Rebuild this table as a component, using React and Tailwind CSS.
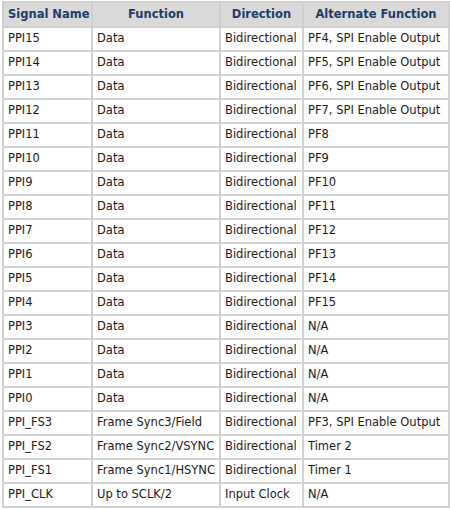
export default function App() {
  const rows = [
    ["PPI15", "Data", "Bidirectional", "PF4, SPI Enable Output"],
    ["PPI14", "Data", "Bidirectional", "PF5, SPI Enable Output"],
    ["PPI13", "Data", "Bidirectional", "PF6, SPI Enable Output"],
    ["PPI12", "Data", "Bidirectional", "PF7, SPI Enable Output"],
    ["PPI11", "Data", "Bidirectional", "PF8"],
    ["PPI10", "Data", "Bidirectional", "PF9"],
    ["PPI9", "Data", "Bidirectional", "PF10"],
    ["PPI8", "Data", "Bidirectional", "PF11"],
    ["PPI7", "Data", "Bidirectional", "PF12"],
    ["PPI6", "Data", "Bidirectional", "PF13"],
    ["PPI5", "Data", "Bidirectional", "PF14"],
    ["PPI4", "Data", "Bidirectional", "PF15"],
    ["PPI3", "Data", "Bidirectional", "N/A"],
    ["PPI2", "Data", "Bidirectional", "N/A"],
    ["PPI1", "Data", "Bidirectional", "N/A"],
    ["PPI0", "Data", "Bidirectional", "N/A"],
    ["PPI_FS3", "Frame Sync3/Field", "Bidirectional", "PF3, SPI Enable Output"],
    ["PPI_FS2", "Frame Sync2/VSYNC", "Bidirectional", "Timer 2"],
    ["PPI_FS1", "Frame Sync1/HSYNC", "Bidirectional", "Timer 1"],
    ["PPI_CLK", "Up to SCLK/2", "Input Clock", "N/A"],
  ];
  const heads = ["Signal Name", "Function", "Direction", "Alternate Function"];
  const widths = ["w-[89px]", "w-[128px]", "w-[83px]", "w-[146px]"];
  return (
    <div className="w-[450px] h-[509px] bg-white pt-[1px] pl-[2px]" style={{ fontFamily: '"DejaVu Sans", Verdana, sans-serif' }}>
      <table className="table-fixed border-collapse w-[446px] text-[11.5px] text-[#1a1a1a]">
        <thead>
          <tr className="h-[25px] bg-[#d9d9d9]">
            {heads.map((h, i) => (
              <th key={i} className={`${widths[i]} border-2 border-[#cfcfcf] text-center font-bold text-[#1d3b6a] px-[4px] whitespace-nowrap`}>{h}</th>
            ))}
          </tr>
        </thead>
        <tbody>
          {rows.map((r, ri) => (
            <tr key={ri} className="h-[24px] bg-white">
              {r.map((c, ci) => (
                <td key={ci} className="border-2 border-[#d2d2d2] px-[4px] whitespace-nowrap overflow-hidden">{c}</td>
              ))}
            </tr>
          ))}
        </tbody>
      </table>
    </div>
  );
}
